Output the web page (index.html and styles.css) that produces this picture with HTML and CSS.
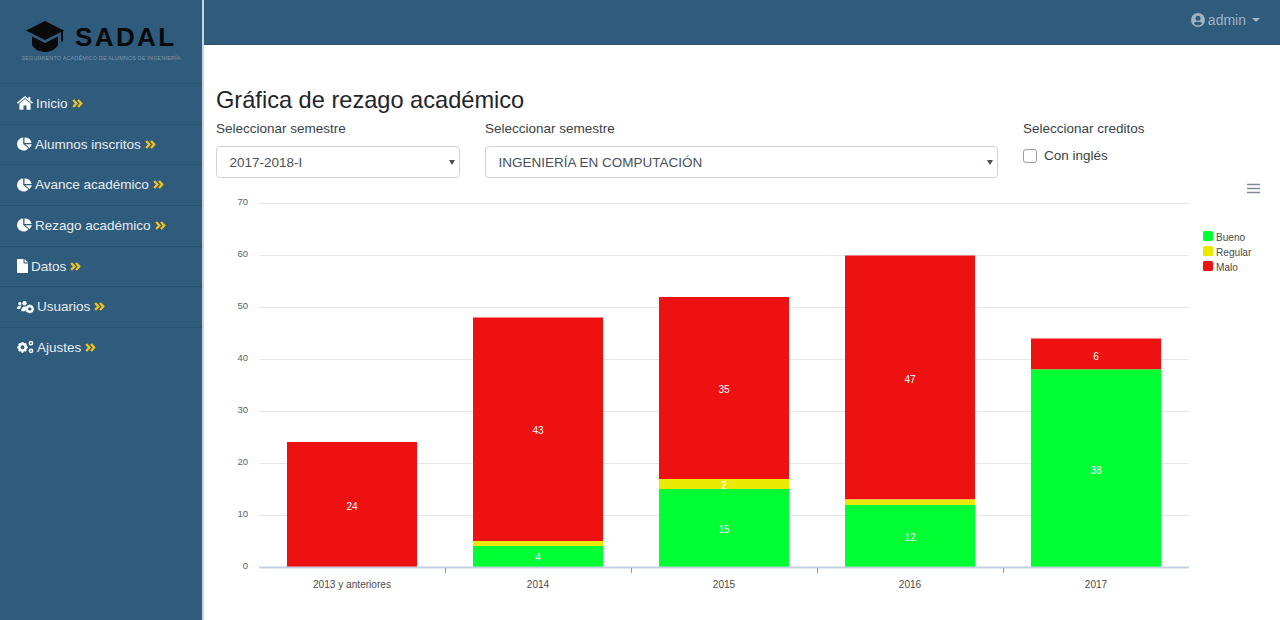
FILE: index.html
```html
<!DOCTYPE html>
<html lang="es">
<head>
  <meta charset="UTF-8" />
  <meta name="viewport" content="width=device-width, initial-scale=1.0" />
  <title>SADAL - Rezago académico</title>
  <link rel="stylesheet" href="styles.css">
</head>
<body>

  <!-- iconos del menu -->
  <svg class="defs">
    <symbol id="i-chev" viewBox="0 0 11 9">
      <path d="M1.200 1 4.400 4.500 1.200 8M6 1 9.200 4.500 6 8" fill="none" stroke="#f4c21f" stroke-width="2.300"/>
    </symbol>
    <symbol id="i-home" viewBox="0 0 16 14">
      <path d="M8 0 0 6.600l.9 1.100L8 1.900l7.100 5.800.9-1.100-2.700-2.200V1h-2v2L8 0zM8 3 2.400 7.600V13c0 .4.300.7.700.7h3.400V9.500h3V13.700h3.400c.4 0 .7-.3.7-.7V7.600z" fill="#fff"/>
    </symbol>
    <symbol id="i-pie" viewBox="0 0 16 14">
      <path d="M6.600 0A7 7 0 1 0 12.300 11.600L6.600 7z" fill="#fff"/>
      <path d="M8 0v6h7.600A7 7 0 0 0 8 0zM8.800 7.300l4.500 3.900a6.500 6.500 0 0 0 2.500-3.900z" fill="#fff"/>
    </symbol>
    <symbol id="i-file" viewBox="0 0 11 14">
      <path d="M0 .7C0 .3.300 0 .7 0H6.500v3.800c0 .4.300.7.700.7H11v8.800c0 .4-.3.7-.7.700H.7c-.4 0-.7-.3-.7-.7zM7.500 0 11 3.500H7.500z" fill="#fff"/>
    </symbol>
    <symbol id="i-users" viewBox="0 0 18 13">
      <circle cx="3" cy="3" r="1.700" fill="#fff"/>
      <circle cx="8" cy="2.500" r="2.300" fill="#fff"/>
      <path d="M0 8.500C0 6.500 1.200 5.300 3 5.300s1.800.5 1.800.5C3.900 6.500 3.500 7.500 3.500 8.500zM4.500 11c0-3 1.500-5 3.500-5s2.500.6 2.500.6L9 11z" fill="#fff"/>
      <circle cx="13.500" cy="8.500" r="3" fill="none" stroke="#fff" stroke-width="2.400"/>
      <path d="M13.500 3.800v1.500M13.500 11.700v1.300M9 8.500h1.400M16.600 8.500H18M10.400 5.400l1 1M15.600 10.600l1 1M16.600 5.400l-1 1M11.400 10.600l-1 1" stroke="#fff" stroke-width="1.500"/>
    </symbol>
    <symbol id="i-cogs" viewBox="0 0 17 13">
      <circle cx="5.500" cy="6.800" r="3.300" fill="none" stroke="#fff" stroke-width="2.600"/>
      <path d="M5.500 1.500v2M5.500 10v2.500M.2 6.800h2M8.800 6.800h2M1.800 3.100l1.400 1.400M7.800 9.100l1.400 1.400M9.200 3.100 7.800 4.500M3.200 9.100l-1.400 1.400" stroke="#fff" stroke-width="1.800"/>
      <circle cx="14" cy="2.700" r="1.600" fill="none" stroke="#fff" stroke-width="1.500"/>
      <circle cx="14" cy="10.300" r="1.600" fill="none" stroke="#fff" stroke-width="1.500"/>
    </symbol>
  </svg>

  <div class="layout">
    <aside class="sidebar">
      <div class="brand">
        <div class="brand-row">
          <svg class="brand-cap" viewBox="0 0 38 32">
            <path d="M19 0 0 9.500l19 9.500 16-8v9.500h2V10.500L38 9.500z" fill="#0a0a0a"/>
            <path d="M6 15.500v8.500c3 5 8.500 7 13 7s10-2 13-7v-8.500L19 22z" fill="#0a0a0a"/>
          </svg>
          <span class="brand-name">SADAL</span>
        </div>
        <div class="brand-sub">SEGUIMIENTO ACADÉMICO DE ALUMNOS DE INGENIERÍA</div>
      </div>
      <nav class="menu">
        <a class="menu-item" href="#"><svg class="ico ico-home"><use href="#i-home"/></svg>Inicio<svg class="chev"><use href="#i-chev"/></svg></a>
        <a class="menu-item" href="#"><svg class="ico ico-pie"><use href="#i-pie"/></svg>Alumnos inscritos<svg class="chev"><use href="#i-chev"/></svg></a>
        <a class="menu-item" href="#"><svg class="ico ico-pie"><use href="#i-pie"/></svg>Avance académico<svg class="chev"><use href="#i-chev"/></svg></a>
        <a class="menu-item" href="#"><svg class="ico ico-pie"><use href="#i-pie"/></svg>Rezago académico<svg class="chev"><use href="#i-chev"/></svg></a>
        <a class="menu-item" href="#"><svg class="ico ico-file"><use href="#i-file"/></svg>Datos<svg class="chev"><use href="#i-chev"/></svg></a>
        <a class="menu-item" href="#"><svg class="ico ico-wide"><use href="#i-users"/></svg>Usuarios<svg class="chev"><use href="#i-chev"/></svg></a>
        <a class="menu-item" href="#"><svg class="ico ico-wide"><use href="#i-cogs"/></svg>Ajustes<svg class="chev"><use href="#i-chev"/></svg></a>
      </nav>
    </aside>

    <div class="main">
      <header class="topbar">
        <a class="user" href="#">
          <svg class="user-ico" viewBox="0 0 14 14">
            <path d="M7 0a7 7 0 1 0 0 14A7 7 0 0 0 7 0zm0 2.700a2.500 2.500 0 1 1 0 5 2.500 2.500 0 0 1 0-5zm0 9.700a5.400 5.400 0 0 1-4.100-1.900C3.400 9.500 4.400 8.800 5.400 8.800c.5.200 1 .3 1.600.3s1.100-.1 1.600-.3c1 0 2 .7 2.500 1.700A5.400 5.400 0 0 1 7 12.400z" fill="#9fb3c3"/>
          </svg>
          admin
          <span class="caret"></span>
        </a>
      </header>

      <section class="content">
        <h1 class="title">Gráfica de rezago académico</h1>
        <form class="filters">
          <div class="field">
            <label class="field-label">Seleccionar semestre</label>
            <div class="select-box"><span>2017-2018-I</span><span class="select-arrow"></span></div>
          </div>
          <div class="field">
            <label class="field-label">Seleccionar semestre</label>
            <div class="select-box"><span>INGENIERÍA EN COMPUTACIÓN</span><span class="select-arrow"></span></div>
          </div>
          <div class="field">
            <label class="field-label">Seleccionar creditos</label>
            <label class="check"><span class="check-box"></span>Con inglés</label>
          </div>
        </form>
      </section>

      <!-- grafica: coordenadas calculadas a mano, 5.2px por unidad -->
      <svg class="chart" viewBox="204 180 1076 440">
        <g class="grid">
          <path d="M259 203.500H1189M259 255.500H1189M259 307.500H1189M259 359.500H1189M259 411.500H1189M259 463.500H1189M259 515.500H1189"/>
        </g>
        <g class="y-labels">
          <text x="248" y="205">70</text>
          <text x="248" y="257">60</text>
          <text x="248" y="309">50</text>
          <text x="248" y="361">40</text>
          <text x="248" y="413">30</text>
          <text x="248" y="465">20</text>
          <text x="248" y="517">10</text>
          <text x="248" y="569">0</text>
        </g>

        <rect x="287" y="442" width="130" height="125" fill="#ee1111"/>

        <rect x="473" y="317.500" width="130" height="223.500" fill="#ee1111"/>
        <rect x="473" y="541" width="130" height="5" fill="#eaea00"/>
        <rect x="473" y="546" width="130" height="21" fill="#00ff33"/>

        <rect x="659" y="297" width="130" height="182" fill="#ee1111"/>
        <rect x="659" y="479" width="130" height="10" fill="#eaea00"/>
        <rect x="659" y="489" width="130" height="78" fill="#00ff33"/>

        <rect x="845" y="255.500" width="130" height="244" fill="#ee1111"/>
        <rect x="845" y="499.500" width="130" height="5.500" fill="#eaea00"/>
        <rect x="845" y="505" width="130" height="62" fill="#00ff33"/>

        <rect x="1031" y="338.500" width="130" height="31" fill="#ee1111"/>
        <rect x="1031" y="369.500" width="130" height="197.500" fill="#00ff33"/>

        <path class="axis" d="M259 567.500H1189"/>
        <path class="tick" d="M445.500 568v5M631.500 568v5M817.500 568v5M1003.500 568v5"/>

        <g class="values">
          <text x="352" y="510">24</text>
          <text x="538" y="434">43</text>
          <text x="538" y="561">4</text>
          <text x="724" y="393">35</text>
          <text x="724" y="489">2</text>
          <text x="724" y="533">15</text>
          <text x="910" y="383">47</text>
          <text x="910" y="541">12</text>
          <text x="1096" y="360">6</text>
          <text x="1096" y="474">38</text>
        </g>
        <g class="x-labels">
          <text x="352" y="588">2013 y anteriores</text>
          <text x="538" y="588">2014</text>
          <text x="724" y="588">2015</text>
          <text x="910" y="588">2016</text>
          <text x="1096" y="588">2017</text>
        </g>

        <rect x="1203" y="231" width="10" height="10" rx="1.500" fill="#00ff33"/>
        <rect x="1203" y="246" width="10" height="10" rx="1.500" fill="#eaea00"/>
        <rect x="1203" y="261" width="10" height="10" rx="1.500" fill="#ee1111"/>
        <g class="legend">
          <text x="1216" y="241">Bueno</text>
          <text x="1216" y="256">Regular</text>
          <text x="1216" y="271">Malo</text>
        </g>

        <path class="burger" d="M1247 184.500h13M1247 188.500h13M1247 192.500h13"/>
      </svg>
    </div>
  </div>

</body>
</html>
```

FILE: styles.css
```css
* {
  box-sizing: border-box;
}
body {
  margin: 0;
  height: 620px;
  overflow: hidden;
  font-family: "Liberation Sans", Arial, sans-serif;
  font-size: 14px;
  color: #212529;
  background: #fff;
}
.defs {
  display: none;
}
.layout {
  display: flex;
  height: 620px;
}

/* sidebar */
.sidebar {
  width: 204px;
  flex: none;
  background: #2f5b7c;
  border-right: 2px solid #c9d3db;
}
.brand {
  height: 83px;
  padding-top: 21px;
}
.brand-row {
  display: flex;
  align-items: center;
  padding-left: 26px;
  gap: 11px;
}
.brand-cap {
  width: 38px;
  height: 32px;
}
.brand-name {
  font-size: 26px;
  line-height: 32px;
  font-weight: bold;
  letter-spacing: 2.400px;
  color: #0a0a0a;
}
.brand-sub {
  margin-top: 2px;
  text-align: center;
  font-size: 5.400px;
  white-space: nowrap;
  letter-spacing: .2px;
  color: #7f97aa;
}
.menu-item {
  display: flex;
  align-items: center;
  height: 40.700px;
  padding: 0 0 1px 17px;
  border-top: 1px solid #29516f;
  color: #e8edf1;
  text-decoration: none;
  font-size: 13.500px;
}
.ico {
  flex: none;
  margin-right: 3px;
}
.ico-home {
  width: 16px;
  height: 14px;
}
.ico-wide {
  width: 17px;
  height: 14px;
}
.ico-pie {
  width: 15px;
  height: 14px;
}
.ico-file {
  width: 11px;
  height: 14px;
}
.chev {
  width: 11px;
  height: 9px;
  margin-left: 4px;
}

/* zona principal */
.main {
  flex: 1;
  min-width: 0;
}
.topbar {
  height: 45px;
  background: #2f5b7c;
  display: flex;
  align-items: center;
  justify-content: flex-end;
  padding: 0 20px 4px 0;
  border-bottom: 1px solid #2a5270;
}
.user {
  display: flex;
  align-items: center;
  color: #9fb3c3;
  text-decoration: none;
  font-size: 14px;
}
.user-ico {
  width: 14px;
  height: 14px;
  margin-right: 3px;
}
.caret {
  margin-left: 6px;
  border-top: 4px solid #9fb3c3;
  border-left: 4px solid transparent;
  border-right: 4px solid transparent;
}
.content {
  padding: 41px 0 0 12px;
  height: 135px;
}
.title {
  margin: 0;
  font-size: 23.600px;
  font-weight: 400;
  line-height: 29px;
}
.filters {
  display: grid;
  grid-template-columns: 244px 513px 200px;
  column-gap: 25px;
  margin-top: 5px;
}
.field-label {
  display: block;
  font-size: 13.500px;
  line-height: 17px;
  color: #3a3f44;
}
.select-box {
  display: flex;
  align-items: center;
  justify-content: space-between;
  height: 32px;
  margin-top: 9px;
  padding: 0 4px 0 12.500px;
  border: 1px solid #ced4da;
  border-radius: 4px;
  font-size: 13.500px;
  color: #495057;
  background: #fff;
}
.select-arrow {
  border-top: 5px solid #495057;
  border-left: 3px solid transparent;
  border-right: 3px solid transparent;
}
.check {
  display: flex;
  align-items: center;
  margin-top: 9px;
  height: 19px;
  font-size: 13.500px;
  color: #3a3f44;
}
.check-box {
  width: 14px;
  height: 14px;
  margin-right: 7px;
  border: 1px solid #9a9a9a;
  border-radius: 3px;
}

/* grafica */
.chart {
  display: block;
  width: 1076px;
  height: 440px;
}
.grid path {
  stroke: #e6e6e6;
  stroke-width: 1;
  fill: none;
}
.axis {
  stroke: #c0d0e0;
  stroke-width: 2;
  fill: none;
}
.tick {
  stroke: #8a9aa8;
  stroke-width: 1;
  fill: none;
}
.burger {
  stroke: #7d8c99;
  stroke-width: 1.600;
  fill: none;
}
.y-labels text {
  font-size: 9.500px;
  fill: #606060;
  text-anchor: end;
}
.x-labels text {
  font-size: 10.100px;
  fill: #4a4a4a;
  text-anchor: middle;
}
.values text {
  font-size: 10.100px;
  fill: #fff;
  text-anchor: middle;
}
.legend text {
  font-size: 10.100px;
  fill: #4a4a4a;
}
```
